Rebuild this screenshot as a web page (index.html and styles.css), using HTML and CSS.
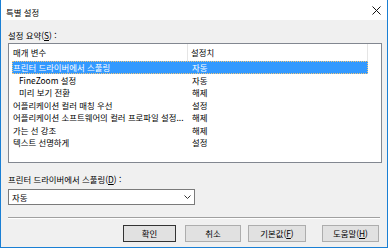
FILE: index.html
```html
<!DOCTYPE html>
<html lang="ko">
<head>
    <meta charset="UTF-8">
    <title>특별 설정</title>
    <link rel="stylesheet" href="styles.css">
</head>
<body>
    <div class="dialog">
        <div class="titlebar">
            <span class="title">특별 설정</span>
            <svg class="close" width="9" height="9" viewBox="0 0 9 9">
                <path d="M0.5 0.5 L8.5 8.5 M8.5 0.5 L0.5 8.5" stroke="#111" stroke-width="1" fill="none"/>
            </svg>
        </div>
        <div class="content">
            <div class="label">설정 요약(<u>S</u>) :</div>
            <div class="listbox">
                <div class="list-header">
                    <div class="col-name">매개 변수</div>
                    <div class="col-value">설정치</div>
                </div>
                <div class="rows">
                    <div class="row selected">
                        <div class="col-name">프린터 드라이버에서 스풀링</div>
                        <div class="col-value">자동</div>
                    </div>
                    <div class="row">
                        <div class="col-name sub">FineZoom 설정</div>
                        <div class="col-value">자동</div>
                    </div>
                    <div class="row">
                        <div class="col-name sub">미리 보기 전환</div>
                        <div class="col-value">해제</div>
                    </div>
                    <div class="row">
                        <div class="col-name">어플리케이션 컬러 매칭 우선</div>
                        <div class="col-value">설정</div>
                    </div>
                    <div class="row">
                        <div class="col-name">어플리케이션 소프트웨어의 컬러 프로파일 설정...</div>
                        <div class="col-value">해제</div>
                    </div>
                    <div class="row">
                        <div class="col-name">가는 선 강조</div>
                        <div class="col-value">해제</div>
                    </div>
                    <div class="row">
                        <div class="col-name">텍스트 선명하게</div>
                        <div class="col-value">설정</div>
                    </div>
                </div>
            </div>

            <div class="label combo-label">프린터 드라이버에서 스풀링(<u>D</u>) :</div>
            <div class="combo">
                <span>자동</span>
                <svg class="chevron" width="7" height="4" viewBox="0 0 7 4">
                    <path d="M0.5 0.5 L3.5 3.5 L6.5 0.5" stroke="#333" stroke-width="1" fill="none"/>
                </svg>
            </div>

            <div class="separator"></div>

            <div class="buttons">
                <button class="btn btn-ok">확인</button>
                <button class="btn btn-cancel">취소</button>
                <button class="btn btn-default">기본값(<u>F</u>)</button>
                <button class="btn btn-help">도움말(<u>H</u>)</button>
            </div>
        </div>
    </div>
</body>
</html>
```

FILE: styles.css
```css
body{
    margin: 0;
    font-family: "Noto Sans CJK KR", "Noto Sans", sans-serif;
    font-size: 8.4px;
    color: #000;
}
.dialog{
    width: 388px;
    height: 248px;
    box-sizing: border-box;
    border: 1px solid #1a7fd4;
    border-top: none;
    display: flex;
    flex-direction: column;
    background-color: #f0f0f0;
}
.titlebar{
    height: 20px;
    background-color: #fff;
    display: flex;
    align-items: center;
    justify-content: space-between;
    padding: 0 6px 0 5px;
}
.title{
    line-height: 12px;
    margin-top: 3px;
}
.close{
    display: block;
    margin-top: 1px;
}
.content{
    padding: 9px 0 0 7px;
}
.label{
    line-height: 12px;
    height: 12px;
}
.listbox{
    margin-top: 2px;
    width: 374px;
    height: 120px;
    box-sizing: border-box;
    border: 1px solid #828790;
    background-color: #fff;
}
.list-header{
    display: flex;
    height: 17px;
    line-height: 17px;
}
.list-header .col-name{
    width: 179px;
    padding-left: 4px;
    border-right: 1px solid #e5e5e5;
}
.list-header .col-value{
    width: 180px;
    border-right: 1px solid #e5e5e5;
}
.row{
    display: flex;
    height: 12.5px;
    line-height: 12px;
    width: 356px;
    margin-left: 3px;
    box-sizing: border-box;
    white-space: nowrap;
}
.col-name{
    width: 177px;
    padding-left: 1px;
    box-sizing: border-box;
}
.col-value{
    width: 179px;
    padding-left: 3px;
    box-sizing: border-box;
}
.row .col-name.sub{
    padding-left: 7px;
}
.row.selected{
    background-color: #3399ff;
    color: #fff;
    outline: 1px dotted #f3c67a;
    outline-offset: -1px;
}
.combo-label{
    margin-top: 10px;
}
.combo{
    margin-top: 4px;
    width: 187px;
    height: 16px;
    box-sizing: border-box;
    border: 1px solid #7a7a7a;
    background-color: #fff;
    display: flex;
    align-items: center;
    justify-content: space-between;
    padding: 0 3px 0 3px;
    line-height: 12px;
}
.chevron{
    display: block;
}
.separator{
    margin-top: 12px;
    width: 372px;
    height: 1px;
    background-color: #a0a0a0;
    border-bottom: 1px solid #fff;
}
.buttons{
    margin-top: 6px;
    display: flex;
}
.btn{
    height: 17px;
    padding: 0;
    border: 1px solid #adadad;
    background-color: #e1e1e1;
    font-family: inherit;
    font-size: 8.4px;
    color: #000;
    line-height: 13px;
}
.btn-ok{
    margin-left: 115px;
    width: 53px;
    border-color: #333;
}
.btn-cancel{
    margin-left: 9px;
    width: 56px;
}
.btn-default{
    margin-left: 7px;
    width: 58px;
}
.btn-help{
    margin-left: 16px;
    width: 57px;
}
```
